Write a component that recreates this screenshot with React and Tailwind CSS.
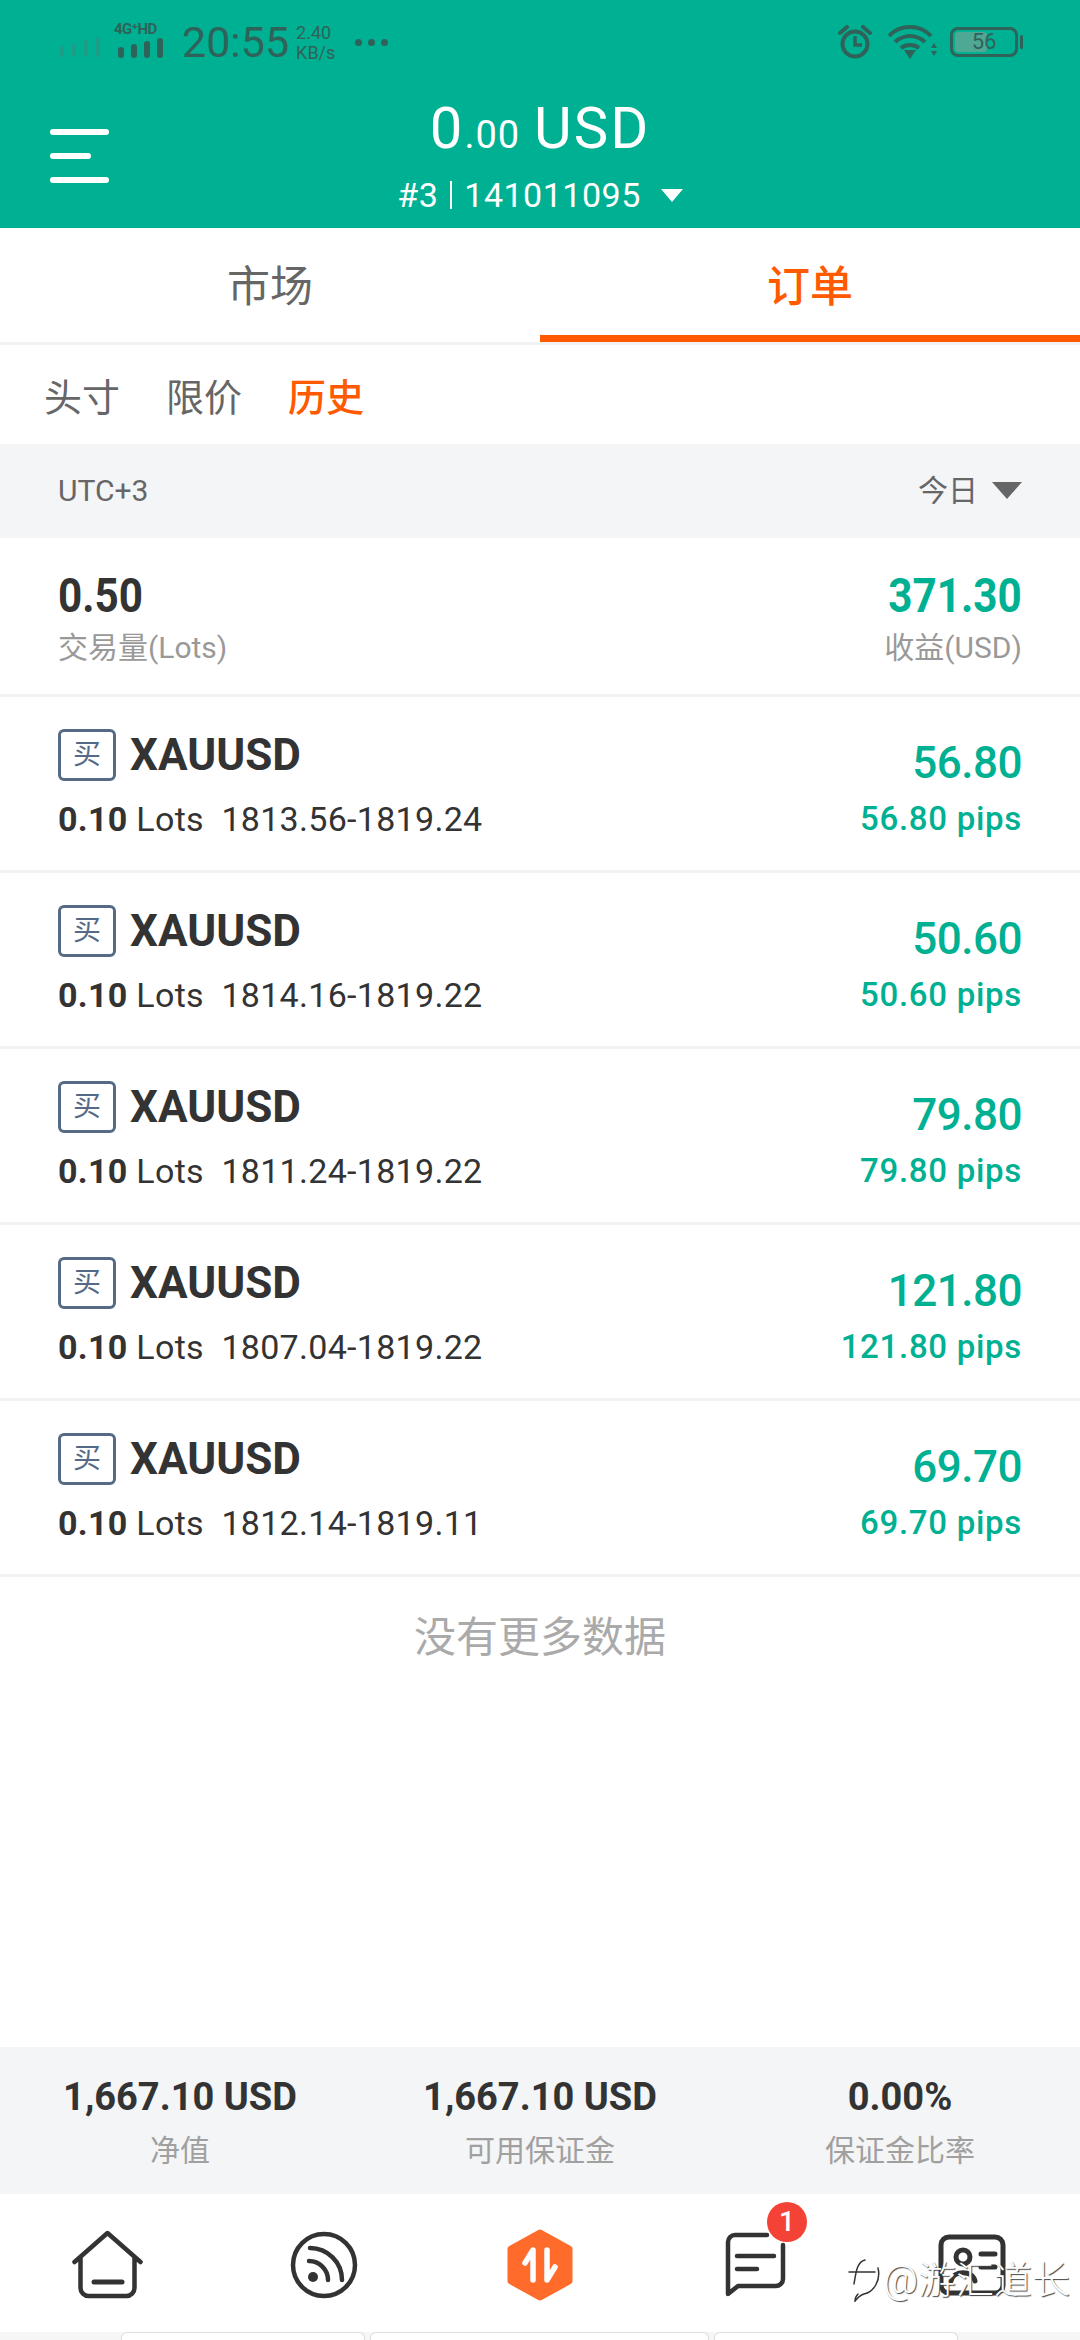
import React from 'react';

const orders = [
  { range: '1813.56-1819.24', profit: '56.80' },
  { range: '1814.16-1819.22', profit: '50.60' },
  { range: '1811.24-1819.22', profit: '79.80' },
  { range: '1807.04-1819.22', profit: '121.80' },
  { range: '1812.14-1819.11', profit: '69.70' },
];

const account = [
  { value: '1,667.10 USD', label: '净值' },
  { value: '1,667.10 USD', label: '可用保证金' },
  { value: '0.00%', label: '保证金比率' },
];

function StatusBar() {
  return (
    <div className="h-[84px] pl-[60px] pr-[62px] flex items-center justify-between text-[#2f6359]">
      <div className="flex items-center">
        <svg width="42" height="20" viewBox="0 0 42 20" fill="#1f9c85" className="mt-[10px]">
          <rect x="0" y="9" width="4" height="11" rx="2" />
          <rect x="12" y="6" width="4" height="14" rx="2" />
          <rect x="24" y="3" width="4" height="17" rx="2" />
          <rect x="36" y="0" width="4" height="20" rx="2" />
        </svg>
        <div className="ml-[12px] w-[60px] flex flex-col items-start mt-[-6px]">
          <span className="text-[15px] leading-[16px] font-bold whitespace-nowrap tracking-[-0.5px]">4G⁺HD</span>
          <svg width="46" height="20" viewBox="0 0 46 20" fill="#2f6359" className="ml-[4px] mt-[1px]">
            <rect x="0" y="9" width="6" height="11" rx="3" />
            <rect x="13" y="6" width="6" height="14" rx="3" />
            <rect x="26" y="3" width="6" height="17" rx="3" />
            <rect x="39" y="0" width="6" height="20" rx="3" />
          </svg>
        </div>
        <span className="ml-[8px] text-[43px] leading-none">20:55</span>
        <div className="ml-[7px] flex flex-col text-[18px] leading-[20px] mt-[2px]">
          <span>2.40</span>
          <span>KB/s</span>
        </div>
        <span className="ml-[20px] flex gap-[6px]">
          <span className="size-[7px] rounded-full bg-[#2f6359]" />
          <span className="size-[7px] rounded-full bg-[#2f6359]" />
          <span className="size-[7px] rounded-full bg-[#2f6359]" />
        </span>
      </div>
      <div className="flex items-center">
        <svg width="36" height="34" viewBox="0 0 36 34" fill="none" stroke="#2f6359" strokeWidth="4">
          <circle cx="18" cy="19" r="12.5" />
          <path d="M18 11v9h7" strokeWidth="3.5" />
          <path d="M3 8l7-6M33 8l-7-6" strokeLinecap="round" />
        </svg>
        <svg width="50" height="34" viewBox="0 0 50 34" fill="none" stroke="#2f6359" strokeWidth="4" className="ml-[15px]">
          <path d="M1 11C12 -1 32 -1 43 11M7 17c9-8 21-8 30 0M13 23c5-4 13-4 18 0" />
          <path d="M22 34l-6-9h12z" fill="#2f6359" stroke="none" />
          <path d="M46 18l-3 5h6zM46 31l-3-5h6z" fill="#2f6359" stroke="none" />
        </svg>
        <div className="ml-[12px] relative w-[68px] h-[30px] rounded-[8px] border-[3px] border-[#2f6359] p-[2px]">
          <div className="h-full w-[56%] rounded-[3px] bg-[#4fa893]" />
          <span className="absolute inset-0 flex items-center justify-center text-[22px] leading-none">56</span>
          <span className="absolute right-[-8px] top-[5px] w-[3px] h-[14px] rounded-full bg-[#2f6359]" />
        </div>
      </div>
    </div>
  );
}

function Header() {
  return (
    <header className="h-[228px] bg-[#00b092]">
      <StatusBar />
      <div className="relative flex flex-col items-center text-white">
        <div className="text-[58px] leading-[60px] mt-[14px] flex items-baseline tracking-[2px]">
          <span>0</span>
          <span className="text-[38px] tracking-[1px]">.00</span>
          <span className="ml-[14px]">USD</span>
        </div>
        <div className="mt-[12px] flex items-center text-[34px] leading-[36px] tracking-[0.5px]">
          <span>#3</span>
          <span className="mx-[12px] w-[2px] h-[28px] bg-white" />
          <span>141011095</span>
          <span className="ml-[20px] w-0 h-0 border-x-[11px] border-x-transparent border-t-[13px] border-t-white" />
        </div>
        {/* hamburger */}
        <div className="absolute left-[50px] top-[45px] flex flex-col gap-[18px]">
          <div className="w-[59px] h-[6px] rounded-full bg-white" />
          <div className="w-[41px] h-[6px] rounded-full bg-white" />
          <div className="w-[59px] h-[6px] rounded-full bg-white" />
        </div>
      </div>
    </header>
  );
}

function Tabs() {
  return (
    <div className="flex h-[117px] border-b-[3px] border-[#f1f2f4] text-[43px]">
      <div className="flex-1 flex items-center justify-center pt-[4px] text-[#666666]">市场</div>
      <div className="flex-1 flex items-center justify-center pt-[4px] text-[#ff5a00] font-medium relative">
        订单
        <div className="absolute left-0 right-0 bottom-0 h-[7px] bg-[#ff5a00]" />
      </div>
    </div>
  );
}

function OrderRow({ order }) {
  return (
    <div className="h-[176px] border-b-[3px] border-[#f1f2f4] px-[58px] flex justify-between">
      <div>
        <div className="flex items-center mt-[32px]">
          <span className="w-[58px] h-[52px] flex items-center justify-center rounded-[6px] border-[3px] border-[#556b85] text-[#556b85] text-[28px] leading-none">买</span>
          <span className="ml-[14px] text-[44px] leading-[52px] font-bold text-[#333333]">XAUUSD</span>
        </div>
        <div className="mt-[16px] text-[34px] leading-[44px] text-[#333333] tracking-[0.3px] whitespace-pre">
          <span className="font-bold">0.10</span> Lots  {order.range}
        </div>
      </div>
      <div className="flex flex-col items-end text-[#00b092]">
        <span className="mt-[40px] text-[44px] leading-[52px] font-medium tracking-[-0.5px]">{order.profit}</span>
        <span className="mt-[8px] text-[33px] leading-[44px] font-medium tracking-[0.7px]">{order.profit} pips</span>
      </div>
    </div>
  );
}

function AccountBar() {
  return (
    <div className="h-[147px] bg-[#f4f5f7] grid grid-cols-3 text-center">
      {account.map((a) => (
        <div key={a.label} className="pt-[28px]">
          <div className="text-[38px] leading-[44px] font-bold text-[#333333]">{a.value}</div>
          <div className="mt-[12px] text-[30px] leading-[40px] text-[#a0a0a0]">{a.label}</div>
        </div>
      ))}
    </div>
  );
}

function BottomNav() {
  return (
    <nav className="relative h-[146px] bg-white grid grid-cols-5 justify-items-center items-center pt-[1px] pb-[6px]">
      <svg width="72" height="70" viewBox="0 0 72 70" fill="none" stroke="#333333" strokeWidth="4.5" strokeLinejoin="round" strokeLinecap="round">
        <path d="M2.5 32L35.5 3l33 29M8.5 27v31a8 8 0 008 8h38a8 8 0 008-8V27" />
        <path d="M22 52h28" strokeWidth="5" />
      </svg>
      <svg width="68" height="68" viewBox="0 0 68 68" fill="none" stroke="#333333" strokeWidth="4.5" strokeLinecap="round">
        <circle cx="34" cy="34" r="31" />
        <path d="M19 30a19 19 0 0119 19M20 17a32 32 0 0132 32" />
        <circle cx="23" cy="46" r="5" fill="#333333" stroke="none" />
      </svg>
      <svg width="66" height="72" viewBox="0 0 66 72" fill="none">
        <path d="M33 4L62 20V52L33 68L4 52V20Z" fill="#ff6b2b" stroke="#ff6b2b" strokeWidth="7" strokeLinejoin="round" />
        <path d="M26 51V21L18 34M40 21V51L48 38" stroke="white" strokeWidth="5.5" strokeLinecap="round" strokeLinejoin="round" />
      </svg>
      <div className="relative">
        <svg width="62" height="66" viewBox="0 0 62 66" fill="none" stroke="#333333" strokeWidth="4.5" strokeLinejoin="round" strokeLinecap="round" className="block">
          <path d="M42 3H10a7 7 0 00-7 7v52l10-8h38a7 7 0 007-7V13M12 24h37M12 37h20" />
        </svg>
        <span className="absolute left-[42px] top-[-30px] size-[40px] rounded-full bg-[#f44336] text-white text-[28px] font-medium flex items-center justify-center">1</span>
      </div>
      <svg width="68" height="62" viewBox="0 0 68 62" fill="none" stroke="#333333" strokeWidth="5" strokeLinecap="round">
        <rect x="3" y="3" width="62" height="56" rx="8" />
        <circle cx="25" cy="23" r="7" />
        <path d="M13 47c2-11 22-11 24 0M43 20h14M43 33h14" />
      </svg>
      {/* watermark */}
      <div className="absolute right-[10px] top-[64px] flex items-center text-[38px] leading-[44px] font-light text-white [text-shadow:1px_1px_1px_#444444] whitespace-nowrap">
        <svg width="36" height="44" viewBox="0 0 36 44" fill="none" stroke="#333333" strokeWidth="1.5" className="mr-[2px]">
          <path d="M20 2C12 4 11 14 9 26M4 14h26M33 10c3 12-4 24-14 26-3 1-6 3-9 7 0-3 1-5 3-7" strokeLinecap="round" />
        </svg>
        @游汇道长
      </div>
      {/* sliver of the next screen */}
      <div className="absolute left-0 right-0 bottom-0 h-[8px] bg-[#f6f6f6] flex pl-[121px] gap-[5px]">
        <div className="w-[244px] h-full bg-white rounded-t-[6px] border border-b-0 border-[#dddddd]" />
        <div className="w-[339px] h-full bg-white rounded-t-[6px] border border-b-0 border-[#dddddd]" />
        <div className="w-[244px] h-full bg-white rounded-t-[6px] border border-b-0 border-[#dddddd]" />
      </div>
    </nav>
  );
}

export default function App() {
  return (
    <div className="w-[1080px] h-[2340px] flex flex-col bg-white overflow-hidden" style={{ fontFamily: 'Roboto, "Noto Sans CJK SC", sans-serif' }}>
      <Header />
      <Tabs />

      <div className="h-[99px] pl-[44px] pt-[8px] flex items-center gap-[46px] text-[38px] text-[#666666]">
        <span>头寸</span>
        <span>限价</span>
        <span className="text-[#ff5a00] font-medium">历史</span>
      </div>

      <div className="h-[94px] bg-[#f4f5f7] px-[58px] pb-[2px] flex items-center justify-between text-[30px] text-[#666666]">
        <span>UTC+3</span>
        <span className="flex items-center gap-[14px]">
          今日
          <span className="w-0 h-0 border-x-[15px] border-x-transparent border-t-[17px] border-t-[#666666]" />
        </span>
      </div>

      <div className="h-[159px] border-b-[3px] border-[#f1f2f4] px-[58px] flex justify-between pt-[33px]">
        <div>
          <div className="text-[48px] leading-[50px] font-bold text-[#333333] origin-left scale-x-[0.88]">0.50</div>
          <div className="mt-[7px] text-[30px] leading-[40px] text-[#999999]">交易量(Lots)</div>
        </div>
        <div className="flex flex-col items-end">
          <div className="text-[48px] leading-[50px] font-bold text-[#00b092] origin-right scale-x-[0.88]">371.30</div>
          <div className="mt-[7px] text-[30px] leading-[40px] text-[#999999]">收益(USD)</div>
        </div>
      </div>

      {orders.map((order) => (
        <OrderRow key={order.range} order={order} />
      ))}

      <div className="mt-[33px] text-center text-[42px] leading-[56px] text-[#aaaaaa]">没有更多数据</div>

      <div className="flex-1" />
      <AccountBar />
      <BottomNav />
    </div>
  );
}
